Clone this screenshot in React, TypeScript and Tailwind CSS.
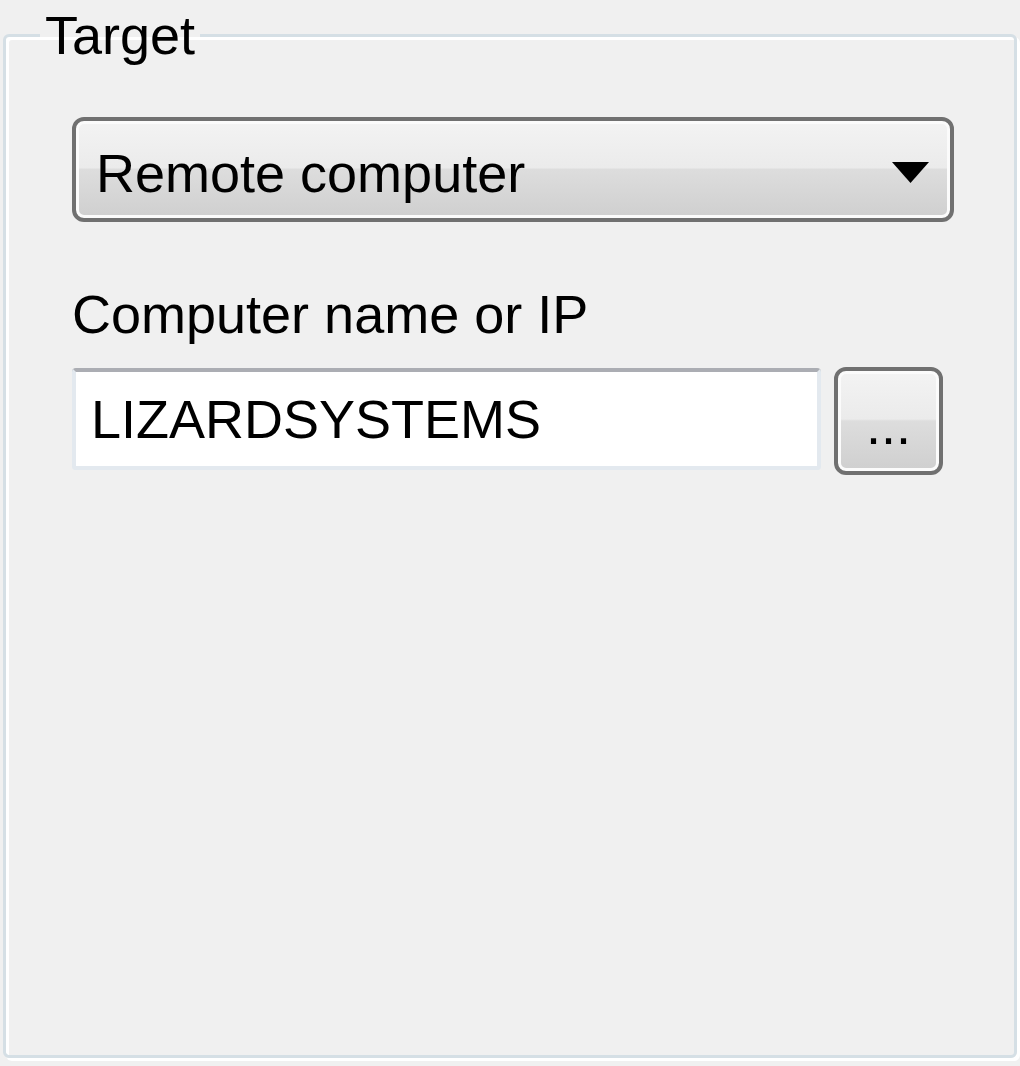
import React from "react";

const font = "font-['Liberation_Sans',Arial,sans-serif] text-[54px] leading-[64px] text-black";

const raised =
  "rounded-[12px] border-[4px] border-[#707070] shadow-[inset_0_0_0_3px_#fbfbfb] bg-[linear-gradient(to_bottom,#f3f3f3_0%,#ebebeb_48%,#dddddd_50%,#cfcfcf_100%)]";

function ComboBox({ value }: { value: string }) {
  return (
    <div className={`${raised} mt-[48px] w-[882px] h-[105px] flex items-center pl-[20px] pr-[21px] pt-[6px]`}>
      <span className={`${font} flex-1 whitespace-nowrap`}>{value}</span>
      <svg width="37" height="21" viewBox="0 0 37 21">
        <polygon points="0,0 37,0 18.5,21" fill="#000" />
      </svg>
    </div>
  );
}

function Field({ label, value }: { label: string; value: string }) {
  return (
    <>
      <div className={`${font} mt-[60px] whitespace-nowrap`}>{label}</div>
      <div className="mt-[21px] flex items-start gap-[13px]">
        <div className="mt-[1px] w-[749px] h-[102px] rounded-[4px] border-[4px] border-[#e3e9ef] border-t-[#abadb3] bg-white flex items-center pl-[15px]">
          <span className={`${font} whitespace-nowrap`}>{value}</span>
        </div>
        <button className={`${raised} w-[109px] h-[108px] flex items-center justify-center pt-[8px]`}>
          <span className={font}>...</span>
        </button>
      </div>
    </>
  );
}

export default function App() {
  return (
    <div className="w-[1020px] h-[1066px] bg-[#f0f0f0] px-[3px] pt-[1px]">
      <fieldset className="h-[1057px] rounded-[6px] border-[3px] border-[#d5dfe5] shadow-[inset_3px_3px_0_#ffffff,3px_3px_0_#ffffff] px-[34px]">
        <legend className={`${font} px-[5px] pt-[2px] pb-[2px]`}>Target</legend>
        <div className="pl-[32px]">
          <ComboBox value="Remote computer" />
          <Field label="Computer name or IP" value="LIZARDSYSTEMS" />
        </div>
      </fieldset>
    </div>
  );
}
